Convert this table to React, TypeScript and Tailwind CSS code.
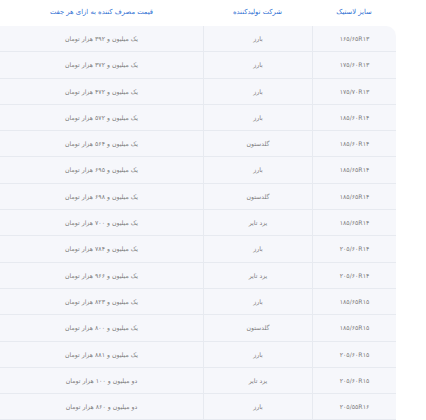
const rows = [
  { size: '۱۶۵/۶۵R۱۳', brand: 'بارز', price: 'یک میلیون و ۳۹۲ هزار تومان' },
  { size: '۱۷۵/۶۰R۱۳', brand: 'بارز', price: 'یک میلیون و ۳۷۲ هزار تومان' },
  { size: '۱۷۵/۷۰R۱۳', brand: 'بارز', price: 'یک میلیون و ۴۷۲ هزار تومان' },
  { size: '۱۸۵/۶۰R۱۴', brand: 'بارز', price: 'یک میلیون و ۵۷۲ هزار تومان' },
  { size: '۱۸۵/۶۰R۱۴', brand: 'گلدستون', price: 'یک میلیون و ۵۶۴ هزار تومان' },
  { size: '۱۸۵/۶۵R۱۴', brand: 'بارز', price: 'یک میلیون و ۶۹۵ هزار تومان' },
  { size: '۱۸۵/۶۵R۱۴', brand: 'گلدستون', price: 'یک میلیون و ۶۹۸ هزار تومان' },
  { size: '۱۸۵/۶۵R۱۴', brand: 'یزد تایر', price: 'یک میلیون و ۷۰۰ هزار تومان' },
  { size: '۲۰۵/۶۰R۱۴', brand: 'بارز', price: 'یک میلیون و ۷۸۴ هزار تومان' },
  { size: '۲۰۵/۶۰R۱۴', brand: 'یزد تایر', price: 'یک میلیون و ۹۶۶ هزار تومان' },
  { size: '۱۸۵/۶۵R۱۵', brand: 'بارز', price: 'یک میلیون و ۸۲۳ هزار تومان' },
  { size: '۱۸۵/۶۵R۱۵', brand: 'گلدستون', price: 'یک میلیون و ۸۰۰ هزار تومان' },
  { size: '۲۰۵/۶۰R۱۵', brand: 'بارز', price: 'یک میلیون و ۸۸۱ هزار تومان' },
  { size: '۲۰۵/۶۰R۱۵', brand: 'یزد تایر', price: 'دو میلیون و ۱۰۰ هزار تومان' },
  { size: '۲۰۵/۵۵R۱۶', brand: 'بارز', price: 'دو میلیون و ۸۶۰ هزار تومان' },
];

export default function App() {
  return (
    <div className="w-[426px] h-[420px] overflow-hidden bg-white font-['DejaVu_Sans',sans-serif]">
      <div dir="rtl" className="w-[396px]">
        {/* header */}
        <div className="grid grid-cols-[84px_109px_1fr] h-[26px] items-start pt-[7px] text-[6.8px] text-[#2f6fd3]">
          <div className="text-center">سایز لاستیک</div>
          <div className="text-center">شرکت تولیدکننده</div>
          <div className="text-center">قیمت مصرف کننده به ازای هر جفت</div>
        </div>

        <div className="bg-[#f6f7fb] rounded-tr-[10px]">
          {rows.map((row, i) => (
            <div
              key={i}
              className="grid grid-cols-[84px_109px_1fr] h-[26.3px] items-center border-b border-[#e7eaf0] text-[6.2px] text-[#7c7c7c]"
            >
              <div className="h-full flex items-center justify-center border-l border-[#e7eaf0]">{row.size}</div>
              <div className="h-full flex items-center justify-center border-l border-[#e7eaf0]">{row.brand}</div>
              <div className="h-full flex items-center justify-center">{row.price}</div>
            </div>
          ))}
        </div>
      </div>
    </div>
  );
}
